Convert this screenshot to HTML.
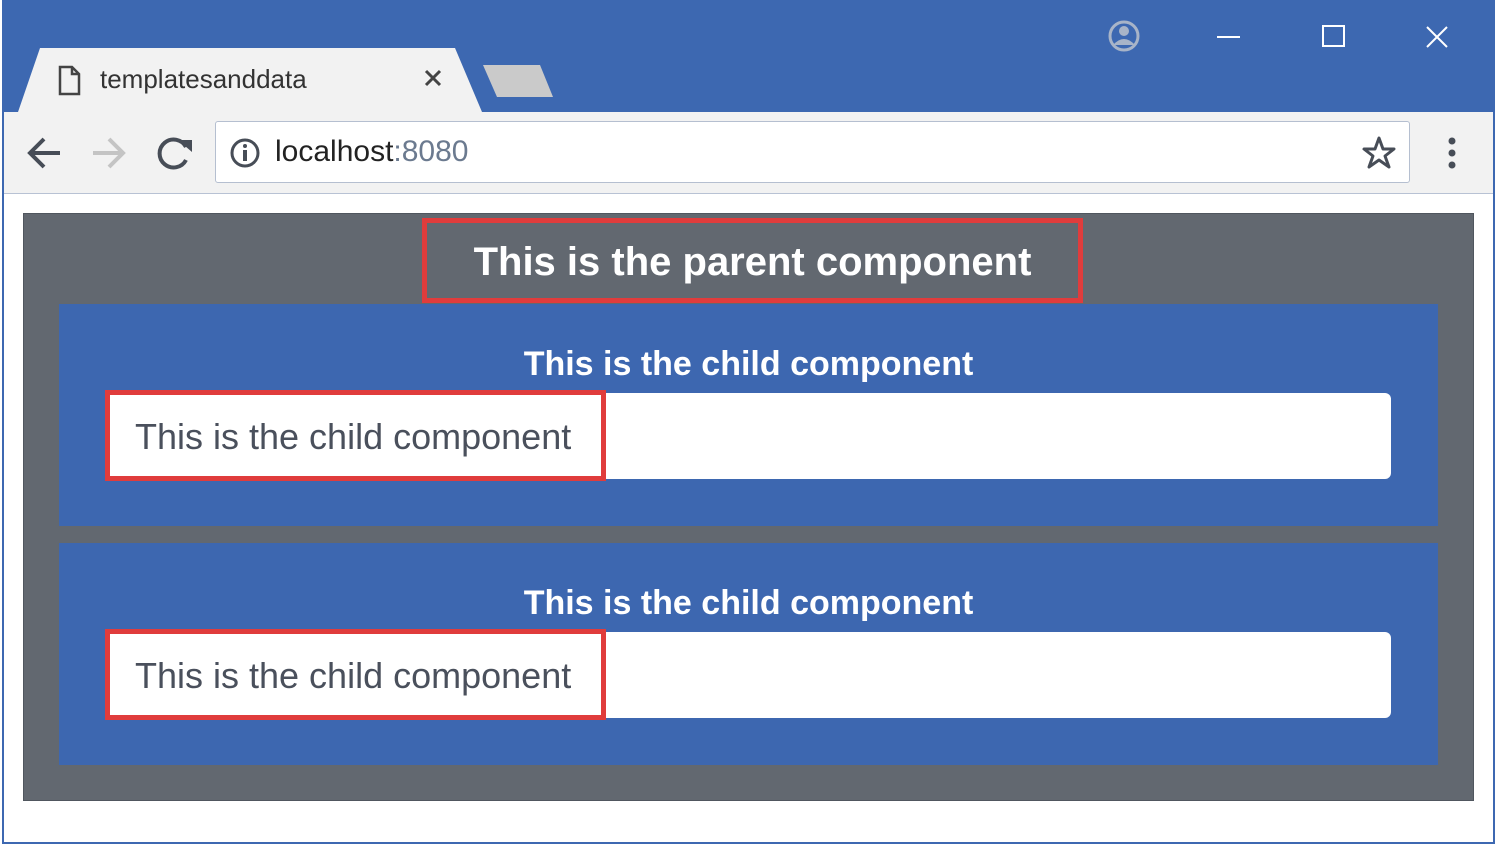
<!DOCTYPE html>
<html><head><style>
*{margin:0;padding:0;box-sizing:border-box}
body{width:1499px;height:848px;background:#fff;position:relative;overflow:hidden;font-family:"Liberation Sans",sans-serif}
.a{position:absolute}
</style></head><body>
<div class="a" style="left:2px;top:0;width:1493px;height:844px;border:2px solid #3d68b1;background:#fff"></div>
<div class="a" style="left:2px;top:0;width:1493px;height:112px;background:#3d68b1"></div>
<svg class="a" style="left:0;top:0" width="1499" height="200">
<polygon points="18,112 40,48 455,48 482,112" fill="#f2f2f2"/>
<polygon points="483,65 540,65 553,97 497,97" fill="#cacaca"/>
<path d="M60,67 h12 l7,7 v20 h-19 z M72,67 v7 h7" fill="none" stroke="#444" stroke-width="2.5"/>
<path d="M426,71 l14,14 M440,71 l-14,14" stroke="#444" stroke-width="3"/>
<circle cx="1124" cy="36" r="14" fill="none" stroke="#a8b4c8" stroke-width="3"/>
<circle cx="1124" cy="31" r="5" fill="#a8b4c8"/>
<path d="M1113,45 q11,-12 22,0" fill="#a8b4c8"/>
<path d="M1217,37 h23" stroke="#fff" stroke-width="2"/>
<rect x="1323" y="26" width="21" height="20" fill="none" stroke="#fff" stroke-width="2"/>
<path d="M1427,27 l20,20 M1447,27 l-20,20" stroke="#fff" stroke-width="2"/>
</svg>
<div class="a" style="left:4px;top:112px;width:1489px;height:82px;background:#f2f2f2;border-bottom:1px solid #b8c2d4"></div>
<div class="a" style="left:215px;top:121px;width:1195px;height:62px;background:#fff;border:1px solid #b5bfd0;border-radius:3px"></div>
<svg class="a" style="left:0;top:112px" width="1499" height="82">
<path d="M30,41 h30 M44,27 l-14,14 l14,14" fill="none" stroke="#474d57" stroke-width="4"/>
<path d="M93,41 h30 M109,27 l14,14 l-14,14" fill="none" stroke="#c4c4c4" stroke-width="4"/>
<path d="M186,35 A14,14 0 1 0 186,48" fill="none" stroke="#474d57" stroke-width="4"/>
<polygon points="178,28 192,28 192,40" fill="#474d57"/>
<circle cx="245" cy="41" r="13" fill="none" stroke="#474d57" stroke-width="3"/>
<circle cx="245" cy="34" r="2" fill="#474d57"/><rect x="243" y="38" width="4" height="11" fill="#474d57"/>
<polygon points="1379,26 1383,37 1394,37 1385,44 1389,55 1379,48 1369,55 1373,44 1364,37 1375,37" fill="none" stroke="#474d57" stroke-width="3" stroke-linejoin="round"/>
<circle cx="1452" cy="29" r="3.5" fill="#474d57"/><circle cx="1452" cy="41" r="3.5" fill="#474d57"/><circle cx="1452" cy="53" r="3.5" fill="#474d57"/>
</svg>
<div class="a" style="left:100px;top:64px;font-size:26px;color:#333">templatesanddata</div>
<div class="a" style="left:275px;top:135px;font-size:30px;color:#222">localhost<span style="color:#6b7a8f">:8080</span></div>
<div class="a" style="left:23px;top:213px;width:1451px;height:588px;background:#626870;border:1px solid #50565e"></div>
<div class="a" style="left:422px;top:218px;width:661px;height:85px;border:5px solid #e03c3c;color:#fff;font-size:40px;font-weight:bold;text-align:center;line-height:78px;white-space:nowrap">This is the parent component</div>
<div class="a" style="left:59px;top:304px;width:1379px;height:222px;background:#3d67b0"></div>
<div class="a" style="left:59px;top:543px;width:1379px;height:222px;background:#3d67b0"></div>
<div class="a" style="left:59px;top:345px;width:1379px;text-align:center;color:#fff;font-size:34px;font-weight:bold">This is the child component</div>
<div class="a" style="left:59px;top:584px;width:1379px;text-align:center;color:#fff;font-size:34px;font-weight:bold">This is the child component</div>
<div class="a" style="left:105px;top:393px;width:1286px;height:86px;background:#fff;border-radius:6px"></div>
<div class="a" style="left:105px;top:632px;width:1286px;height:86px;background:#fff;border-radius:6px"></div>
<div class="a" style="left:105px;top:390px;width:501px;height:91px;border:5px solid #e03c3c;color:#4a505c;font-size:36px;padding-left:25px;line-height:84px;white-space:nowrap">This is the child component</div>
<div class="a" style="left:105px;top:629px;width:501px;height:91px;border:5px solid #e03c3c;color:#4a505c;font-size:36px;padding-left:25px;line-height:84px;white-space:nowrap">This is the child component</div>
</body></html>
